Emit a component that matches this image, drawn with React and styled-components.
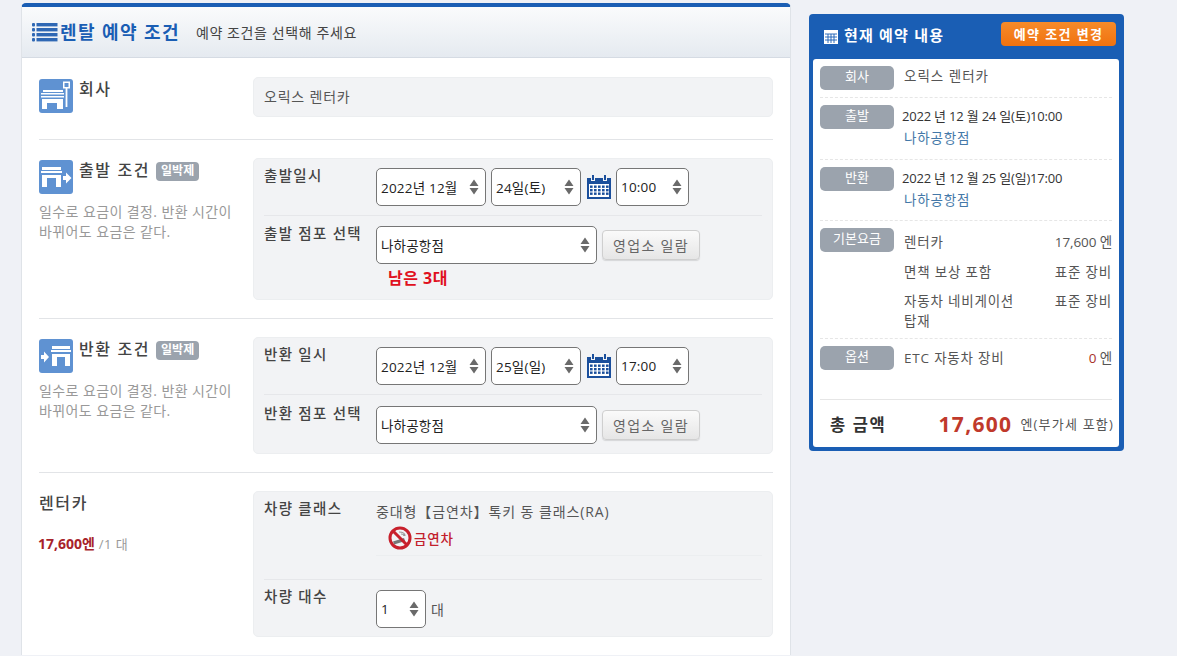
import React from 'react'
import styled, { createGlobalStyle } from 'styled-components'

const blue = '#1a5eb4'
const iconBlue = '#5f92d2'
const gray = '#9ba3ad'
const boxBg = '#f2f3f5'
const fontStack = '"Open Sans", "Noto Sans CJK KR", sans-serif'

const GlobalStyle = createGlobalStyle`
  html, body {
    margin: 0;
    padding: 0;
    height: 656px;
    overflow: hidden;
    background: #eff1f6;
    font-family: ${fontStack};
    font-size: 14px;
    color: #444;
  }
  * { box-sizing: border-box; }
`

const Page = styled.div`
  display: flex;
  align-items: flex-start;
  gap: 18px;
  height: 656px;
  overflow: hidden;
  padding: 3px 0 0 21px;
`

// 왼쪽 패널
const MainPanel = styled.main`
  width: 770px;
  flex: none;
  background: #fff;
  border-top: 4px solid ${blue};
  border-left: 1px solid #dfe3e8;
  border-right: 1px solid #dfe3e8;
  border-radius: 5px 5px 0 0;
`

const PanelHeader = styled.header`
  display: flex;
  align-items: center;
  height: 51px;
  padding: 0 0 0 10px;
  background: linear-gradient(#fafbfc, #e5eaf0);
  border-bottom: 1px solid #d5dbe3;
`

const PanelTitle = styled.h1`
  margin: 0 16px 0 2px;
  font-size: 18px;
  line-height: 24px;
  font-weight: 700;
  letter-spacing: 1.4px;
  color: ${blue};
`

const PanelSub = styled.span`
  font-size: 14px;
  letter-spacing: 0.6px;
  color: #444;
`

const Section = styled.section`
  display: grid;
  grid-template-columns: 214px 520px;
  margin: 0 17px;
  padding: ${p => p.$top}px 0 ${p => p.$bottom}px;
  border-bottom: ${p => (p.$last ? 'none' : '1px solid #e2e4e7')};
`

const SideInfo = styled.div`
  display: flex;
  flex-direction: column;
`

const SideHead = styled.div`
  display: flex;
  align-items: flex-start;
  gap: 6px;
  padding-top: ${p => p.$offset || 0}px;
`

const SideTitle = styled.h2`
  margin: ${p => p.$top ?? -1}px 0 0;
  font-size: 16px;
  line-height: 22px;
  font-weight: 500;
  letter-spacing: 1.6px;
  color: #444;
`

const PlanBadge = styled.span`
  display: inline-block;
  margin-left: 6px;
  padding: 0 5px;
  height: 19px;
  border-radius: 4px;
  background: ${gray};
  color: #fff;
  font-size: 12px;
  line-height: 18px;
  font-weight: 700;
  letter-spacing: 0;
  vertical-align: 1px;
`

const SideNote = styled.p`
  margin: 8px 0 0;
  width: 200px;
  font-size: 14px;
  line-height: 19.5px;
  letter-spacing: 0.4px;
  word-break: keep-all;
  color: #999;
`

const PriceLine = styled.div`
  margin: 19px 0 0 -1px;
  font-size: 13px;
  letter-spacing: 0.5px;
  color: #999;
`

const PriceValue = styled.strong`
  color: #a8232a;
  font-size: 14px;
  font-weight: 700;
  letter-spacing: 0;
`

const ValueBox = styled.div`
  height: 40px;
  padding: 0 10px 3px;
  display: flex;
  align-items: center;
  background: ${boxBg};
  border: 1px solid #eceef0;
  border-radius: 5px;
  color: #555;
  font-size: 14px;
  letter-spacing: 0.8px;
`

const FormBox = styled.div`
  background: ${boxBg};
  border: 1px solid #eceef0;
  border-radius: 5px;
  padding: 0 10px;
`

const FormRow = styled.div`
  display: grid;
  grid-template-columns: 112px 1fr;
  padding: ${p => p.$top}px 0 ${p => p.$bottom}px;
  border-top: ${p => (p.$first ? 'none' : '1px solid #e6e7ea')};
`

const FormLabel = styled.div`
  margin-top: ${p => (p.$raised ? -3 : -2)}px;
  font-size: 14.5px;
  line-height: 20px;
  font-weight: 500;
  letter-spacing: 1.3px;
  color: #444;
`

const Controls = styled.div`
  display: flex;
  align-items: center;
  gap: ${p => p.$gap ?? 5}px;
`

const SelectBox = styled.div`
  display: flex;
  align-items: center;
  justify-content: space-between;
  flex: none;
  width: ${p => p.$w}px;
  height: 38px;
  padding: 0 6px 0 4px;
  background: #fff;
  border: 1px solid #767676;
  border-radius: 5px;
  font-size: 13.5px;
  letter-spacing: 0.2px;
  color: #222;
`

const ArrowIcon = styled.svg`
  width: 10px;
  height: 16px;
  flex: none;
`

const Select = ({ w, children }) => (
  <SelectBox $w={w}>
    <span>{children}</span>
    <ArrowIcon viewBox="0 0 10 16">
      <path d="M5 0.5 L9.5 7 H0.5 Z M5 15.5 L9.5 9 H0.5 Z" fill="#6a6a6a" />
    </ArrowIcon>
  </SelectBox>
)

const ListButton = styled.button`
  width: 98px;
  height: 30px;
  padding: 0;
  font-family: ${fontStack};
  font-size: 14px;
  letter-spacing: 1.3px;
  color: #666;
  background: linear-gradient(#fafafa, #e6e6e6);
  border: 1px solid #cfcfcf;
  border-radius: 4px;
  box-shadow: 0 1px 1px rgba(0, 0, 0, 0.12);
`

const StockNote = styled.div`
  margin: 4px 0 0 12px;
  font-size: 16px;
  line-height: 20px;
  font-weight: 700;
  letter-spacing: 0.5px;
  color: #e01020;
`

const ClassName = styled.div`
  font-size: 14px;
  line-height: 20px;
  letter-spacing: 0.9px;
  color: #555;
`

const SmokeTag = styled.div`
  display: flex;
  align-items: center;
  gap: 2px;
  margin: 4px 0 0 12px;
  padding-bottom: 5px;
  color: #c2202c;
  font-size: 13.5px;
  font-weight: 500;
  letter-spacing: 0.8px;
`

const FaintLine = styled.div`
  height: 1px;
  background: #eceef0;
  margin-bottom: 23px;
`

const Unit = styled.span`
  font-size: 14px;
  color: #555;
`

// 오른쪽 요약
const Summary = styled.aside`
  flex: none;
  width: 315px;
  margin-top: 11px;
  padding: 0 5px 4px 4px;
  background: ${blue};
  border-radius: 4px;
`

const SummaryHead = styled.div`
  display: flex;
  align-items: center;
  height: 45px;
  padding: 0 3px 0 10px;
`

const SummaryTitle = styled.h2`
  flex: 1;
  margin: -4px 0 0 5px;
  font-size: 15px;
  font-weight: 700;
  letter-spacing: 1.2px;
  color: #fff;
`

const ChangeButton = styled.button`
  width: 115px;
  height: 24px;
  padding: 0;
  margin-top: -6px;
  font-family: ${fontStack};
  font-size: 13px;
  font-weight: 700;
  letter-spacing: 1.4px;
  color: #fff;
  background: linear-gradient(#f68b2a, #f0720f);
  border: none;
  border-radius: 4px;
`

const SummaryBody = styled.div`
  background: #fff;
  border-radius: 3px;
  padding: 0 7px;
`

const SummaryRow = styled.div`
  display: grid;
  grid-template-columns: 74px 1fr;
  gap: 10px;
  padding: 7px 0;
  min-height: ${p => p.$h || 0}px;
  border-bottom: ${p => (p.$plain ? 'none' : '1px dashed #e6e6e6')};
`

const RowTag = styled.div`
  height: 24px;
  border-radius: 5px;
  background: ${gray};
  color: #fff;
  font-size: 13px;
  line-height: 21px;
  text-align: center;
`

const RowText = styled.div`
  margin-top: -1px;
  font-size: 13.5px;
  line-height: 22px;
  letter-spacing: 1px;
  color: #555;
`

const DateText = styled.div`
  margin-left: -2px;
  letter-spacing: -0.2px;
  line-height: 22px;
  color: #333;
  font-size: 13px;
`

const ShopLink = styled.a`
  display: block;
  font-size: 13.5px;
  line-height: 22px;
  letter-spacing: 0.8px;
  color: #4478a8;
`

const FeeList = styled.div`
  display: flex;
  flex-direction: column;
  gap: 9.5px;
  padding-top: 4px;
`

const FeeLine = styled.div`
  display: flex;
  justify-content: space-between;
  padding-top: ${p => p.$top || 0}px;
  font-size: 13.5px;
  line-height: 20px;
  letter-spacing: 0.8px;
  word-break: keep-all;
  color: #555;
`

const FeeName = styled.span`
  width: 130px;
`

const FeeAmount = styled.span`
  letter-spacing: -0.1px;
`

const Zero = styled.span`
  color: #a8322a;
`

const TotalRow = styled.div`
  display: flex;
  align-items: center;
  height: 48px;
  padding-left: 10px;
  border-top: 1px solid #e6e6e6;
  white-space: nowrap;
`

const TotalLabel = styled.strong`
  flex: 1;
  font-size: 16.5px;
  font-weight: 700;
  letter-spacing: 1.6px;
  color: #333;
`

const TotalValue = styled.strong`
  font-size: 21px;
  font-weight: 700;
  letter-spacing: 1.3px;
  color: #c0392b;
  margin-right: 8px;
`

const TotalNote = styled.span`
  font-size: 13px;
  letter-spacing: 1.2px;
  color: #555;
  margin-right: -2px;
`

const ListIcon = () => (
  <svg width="26" height="21" viewBox="0 0 26 21">
    {[1, 6, 11, 16].map(y => (
      <g key={y} fill="#2f68b4">
        <rect x="0" y={y} width="3" height="3.4" rx="1" />
        <rect x="4.5" y={y} width="21" height="3.4" />
      </g>
    ))}
  </svg>
)

const ShopIcon = () => (
  <svg width="34" height="34" viewBox="0 0 34 34">
    <rect width="34" height="34" rx="3" fill={iconBlue} />
    <g fill="#fff">
      <rect x="4" y="11" width="20" height="2" />
      <rect x="2" y="14" width="23" height="1.5" />
      <rect x="2" y="17" width="23" height="1.5" />
      <path d="M3 20h21v10H3z M8 24v6h10v-6z" fillRule="evenodd" />
      <path d="M24 2.5h7v7h-2.6V28h-1.8V9.5H24z M25.5 4v4h4V4z" fillRule="evenodd" />
    </g>
  </svg>
)

const DepartIcon = () => (
  <svg width="34" height="34" viewBox="0 0 34 34">
    <rect width="34" height="34" rx="3" fill={iconBlue} />
    <g fill="#fff">
      <rect x="3" y="7" width="19" height="3" />
      <rect x="2" y="11" width="21" height="2" />
      <path d="M3 15h19v12H3z M8 18v9h9v-9z" fillRule="evenodd" />
      <path d="M24 16h3v-3.5l5.5 5.5-5.5 5.5V20h-3z" />
    </g>
  </svg>
)

const ReturnIcon = () => (
  <svg width="34" height="34" viewBox="0 0 34 34">
    <rect width="34" height="34" rx="3" fill={iconBlue} />
    <g fill="#fff">
      <rect x="13" y="7" width="18" height="3" />
      <rect x="12" y="11" width="20" height="2" />
      <path d="M13 15h18v12H13z M18 18v9h8v-9z" fillRule="evenodd" />
      <path d="M2 16h3v-3.5l5 5.5-5 5.5V20H2z" />
    </g>
  </svg>
)

const CalendarIcon = () => (
  <svg width="26" height="26" viewBox="0 0 26 26">
    <path d="M1 4h4v3h4V4h8v3h4V4h4v21H1z" fill="#1b4f9c" />
    <path d="M6 1h2v5H6z M18 1h2v5h-2z" fill="#1b4f9c" />
    <rect x="3" y="10" width="20" height="13" fill="#fff" />
    {[11.5, 15, 18.5].map(y =>
      [4, 8, 12, 16, 20].map(x => (
        <rect key={x + '-' + y} x={x} y={y} width="2.6" height="2.4" fill="#1b4f9c" />
      ))
    )}
  </svg>
)

const NoSmokeIcon = () => (
  <svg width="24" height="24" viewBox="0 0 24 24">
    <path d="M5 15.5l11-3.5 1.2 3-11 3.5z" fill="#777" />
    <path d="M11 6c3 0 6 1 6 4M13 8c2 0 3 .6 3 2" stroke="#999" strokeWidth="1.2" fill="none" />
    <circle cx="12" cy="12" r="10" stroke="#c8202c" strokeWidth="3" fill="none" />
    <path d="M5 5l14 14" stroke="#c8202c" strokeWidth="3" />
  </svg>
)

const CalcIcon = () => (
  <svg width="16" height="16" viewBox="0 0 16 16">
    <rect x="1" y="1" width="14" height="14" fill="#fff" />
    <path d="M2 5h12M2 8h12M2 11h12M5 5v9M8 5v9M11 5v9" stroke={blue} strokeWidth="0.9" />
  </svg>
)

const App = () => (
  <Page>
    <GlobalStyle />
    <MainPanel>
      <PanelHeader>
        <ListIcon />
        <PanelTitle>렌탈 예약 조건</PanelTitle>
        <PanelSub>예약 조건을 선택해 주세요</PanelSub>
      </PanelHeader>

      <Section $top={19} $bottom={22}>
        <SideInfo>
          <SideHead $offset={2}>
            <ShopIcon />
            <SideTitle>회사</SideTitle>
          </SideHead>
        </SideInfo>
        <ValueBox>오릭스 렌터카</ValueBox>
      </Section>

      <Section $top={18} $bottom={18}>
        <SideInfo>
          <SideHead $offset={2}>
            <DepartIcon />
            <SideTitle>출발 조건<PlanBadge>일박제</PlanBadge></SideTitle>
          </SideHead>
          <SideNote>일수로 요금이 결정. 반환 시간이 바뀌어도 요금은 같다.</SideNote>
        </SideInfo>
        <FormBox>
          <FormRow $first $top={9} $bottom={9}>
            <FormLabel>출발일시</FormLabel>
            <Controls>
              <Select w={110}>2022년 12월</Select>
              <Select w={90}>24일(토)</Select>
              <Controls $gap={4}>
                <CalendarIcon />
                <Select w={73}>10:00</Select>
              </Controls>
            </Controls>
          </FormRow>
          <FormRow $top={10} $bottom={11}>
            <FormLabel>출발 점포 선택</FormLabel>
            <div>
              <Controls>
                <Select w={221}>나하공항점</Select>
                <ListButton>영업소 일람</ListButton>
              </Controls>
              <StockNote>남은 3대</StockNote>
            </div>
          </FormRow>
        </FormBox>
      </Section>

      <Section $top={18} $bottom={18}>
        <SideInfo>
          <SideHead $offset={2}>
            <ReturnIcon />
            <SideTitle>반환 조건<PlanBadge>일박제</PlanBadge></SideTitle>
          </SideHead>
          <SideNote>일수로 요금이 결정. 반환 시간이 바뀌어도 요금은 같다.</SideNote>
        </SideInfo>
        <FormBox>
          <FormRow $first $top={9} $bottom={9}>
            <FormLabel>반환 일시</FormLabel>
            <Controls>
              <Select w={110}>2022년 12월</Select>
              <Select w={90}>25일(일)</Select>
              <Controls $gap={4}>
                <CalendarIcon />
                <Select w={73}>17:00</Select>
              </Controls>
            </Controls>
          </FormRow>
          <FormRow $top={11} $bottom={9}>
            <FormLabel>반환 점포 선택</FormLabel>
            <Controls>
              <Select w={221}>나하공항점</Select>
              <ListButton>영업소 일람</ListButton>
            </Controls>
          </FormRow>
        </FormBox>
      </Section>

      <Section $top={18} $bottom={18} $last>
        <SideInfo>
          <SideTitle $top={1}>렌터카</SideTitle>
          <PriceLine>
            <PriceValue>17,600엔</PriceValue> /1 대
          </PriceLine>
        </SideInfo>
        <FormBox>
          <FormRow $first $top={10} $bottom={0}>
            <FormLabel $raised>차량 클래스</FormLabel>
            <div>
              <ClassName>중대형【금연차】톡키 동 클래스(RA)</ClassName>
              <SmokeTag>
                <NoSmokeIcon />
                금연차
              </SmokeTag>
              <FaintLine />
            </div>
          </FormRow>
          <FormRow $top={10} $bottom={8}>
            <FormLabel $raised>차량 대수</FormLabel>
            <Controls>
              <Select w={50}>1</Select>
              <Unit>대</Unit>
            </Controls>
          </FormRow>
        </FormBox>
      </Section>
    </MainPanel>

    <Summary>
      <SummaryHead>
        <CalcIcon />
        <SummaryTitle>현재 예약 내용</SummaryTitle>
        <ChangeButton>예약 조건 변경</ChangeButton>
      </SummaryHead>
      <SummaryBody>
        <SummaryRow>
          <RowTag>회사</RowTag>
          <RowText>오릭스 렌터카</RowText>
        </SummaryRow>
        <SummaryRow $h={62}>
          <RowTag>출발</RowTag>
          <div>
            <DateText>2022 년 12 월 24 일(토)10:00</DateText>
            <ShopLink>나하공항점</ShopLink>
          </div>
        </SummaryRow>
        <SummaryRow $h={61}>
          <RowTag>반환</RowTag>
          <div>
            <DateText>2022 년 12 월 25 일(일)17:00</DateText>
            <ShopLink>나하공항점</ShopLink>
          </div>
        </SummaryRow>
        <SummaryRow>
          <RowTag>기본요금</RowTag>
          <FeeList>
            <FeeLine><FeeName>렌터카</FeeName><FeeAmount>17,600 엔</FeeAmount></FeeLine>
            <FeeLine><FeeName>면책 보상 포함</FeeName><span>표준 장비</span></FeeLine>
            <FeeLine><FeeName>자동차 네비게이션 탑재</FeeName><span>표준 장비</span></FeeLine>
          </FeeList>
        </SummaryRow>
        <SummaryRow $h={60} $plain>
          <RowTag>옵션</RowTag>
          <FeeLine $top={2}>
            <span>ETC 자동차 장비</span>
            <FeeAmount><Zero>0</Zero> 엔</FeeAmount>
          </FeeLine>
        </SummaryRow>
        <TotalRow>
          <TotalLabel>총 금액</TotalLabel>
          <TotalValue>17,600</TotalValue>
          <TotalNote>엔(부가세 포함)</TotalNote>
        </TotalRow>
      </SummaryBody>
    </Summary>
  </Page>
)

export default App
